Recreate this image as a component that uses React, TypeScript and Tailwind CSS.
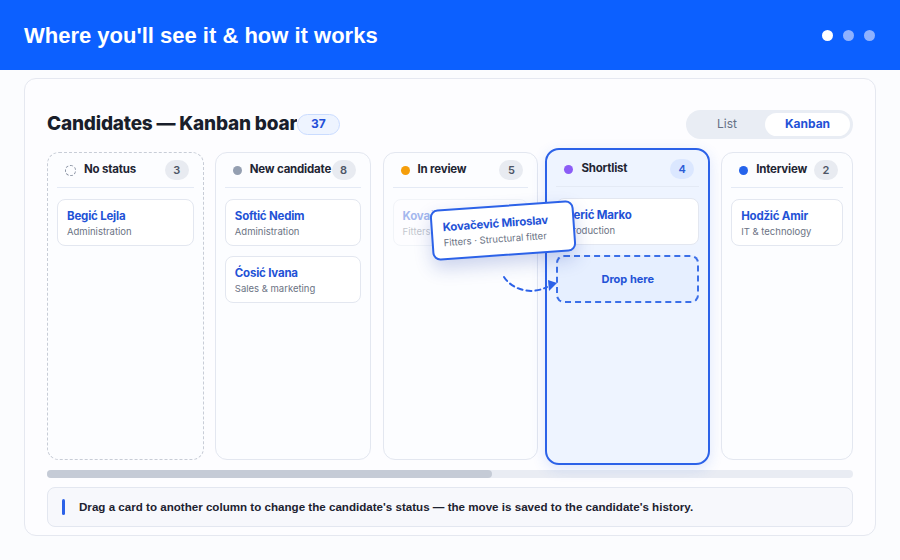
import React from 'react';

type Card = { name: string; sub: string };

const font = { fontFamily: 'Inter, "Noto Sans", sans-serif' };

function Dot({ color }: { color: string }) {
  return <span className={`w-[9px] h-[9px] rounded-full shrink-0 ${color}`} />;
}

function ColumnHeader({ dot, title, count, active }: { dot: React.ReactNode; title: string; count: number; active?: boolean }) {
  return (
    <div className="mx-[9px] h-[35px] flex items-center border-b border-[#e4eaf5]">
      <div className="flex items-center gap-[8px] pl-[8px] flex-1 min-w-0">
        {dot}
        <span className="text-[11.5px] font-bold text-[#1f2533] whitespace-nowrap tracking-[-0.2px]">{title}</span>
      </div>
      <span
        className={`w-[24px] h-[20px] shrink-0 rounded-full text-[11px] font-semibold flex items-center justify-center mr-[5px] ${
          active ? 'bg-[#dbe7ff] text-[#2b5bd7]' : 'bg-[#e8ebf1] text-[#4d5566]'
        }`}
      >
        {count}
      </span>
    </div>
  );
}

function CandidateCard({ card, faded }: { card: Card; faded?: boolean }) {
  return (
    <div className={`h-[47px] rounded-lg border border-[#e3e7f0] bg-white px-[9px] pt-[8px] ${faded ? 'opacity-40' : ''}`}>
      <div className="text-[11.5px] font-bold text-[#2352d6] leading-[16px] tracking-[-0.2px] whitespace-nowrap">{card.name}</div>
      <div className="text-[9.5px] text-[#6b7384] leading-[16px] whitespace-nowrap">{card.sub}</div>
    </div>
  );
}

export default function App() {
  return (
    <div className="w-[900px] h-[560px] bg-[#fbfcfe] overflow-hidden" style={font}>
      {/* top banner */}
      <div className="h-[70px] bg-[#0c60ff] flex items-center justify-between px-[24px]">
        <h1 className="text-white text-[22px] font-bold" style={{ fontFamily: '"Liberation Sans", Arial, sans-serif' }}>
          Where you'll see it &amp; how it works
        </h1>
        <div className="flex items-center gap-[10px] pr-[1px]">
          <span className="w-[11px] h-[11px] rounded-full bg-white" />
          <span className="w-[11px] h-[11px] rounded-full bg-[#8fb2ff]" />
          <span className="w-[11px] h-[11px] rounded-full bg-[#8fb2ff]" />
        </div>
      </div>

      {/* panel */}
      <div className="mx-[24px] mt-[8px] h-[458px] rounded-xl border border-[#e5e8f0] bg-[#fdfdff] px-[22px] pt-[30px]">
        <div className="flex items-center justify-between h-[30px]">
          <div className="flex items-center">
            <div className="w-[250px] overflow-hidden whitespace-nowrap text-[19px] font-extrabold text-[#191e2b] tracking-[-0.2px]">
              Candidates — Kanban board
            </div>
            <span className="h-[21px] px-[13px] rounded-full bg-[#eef4ff] border border-[#cadcff] text-[12px] font-bold text-[#2450d8] flex items-center">
              37
            </span>
          </div>
          <div className="h-[29px] w-[167px] rounded-full bg-[#e9edf4] flex items-center p-[3px]">
            <span className="w-[76px] text-center text-[12px] text-[#667085]">List</span>
            <span className="flex-1 h-[23px] rounded-full bg-white text-[12px] font-bold text-[#2352d6] flex items-center justify-center">
              Kanban
            </span>
          </div>
        </div>

        {/* board */}
        <div className="relative mt-[13px] flex h-[308px]">
          {/* No status */}
          <div className="w-[157px] rounded-xl border-[1.5px] border-dashed border-[#c8cdd7] bg-[#fcfdff]">
            <ColumnHeader
              dot={<span className="w-[11px] h-[11px] rounded-full border-[1.5px] border-dashed border-[#8d96a6] shrink-0" />}
              title="No status"
              count={3}
            />
            <div className="px-[9px] pt-[11px] flex flex-col gap-[10px]">
              <CandidateCard card={{ name: 'Begić Lejla', sub: 'Administration' }} />
            </div>
          </div>

          {/* New candidate */}
          <div className="ml-[11px] w-[156px] rounded-xl border border-[#e3e7f0] bg-[#fcfdff]">
            <ColumnHeader dot={<Dot color="bg-[#949fb1]" />} title="New candidate" count={8} />
            <div className="px-[9px] pt-[11px] flex flex-col gap-[10px]">
              <CandidateCard card={{ name: 'Softić Nedim', sub: 'Administration' }} />
              <CandidateCard card={{ name: 'Ćosić Ivana', sub: 'Sales & marketing' }} />
            </div>
          </div>

          {/* In review */}
          <div className="ml-[12px] w-[156px] rounded-xl border border-[#e3e7f0] bg-[#fcfdff] overflow-hidden">
            <ColumnHeader dot={<Dot color="bg-[#f59e0b]" />} title="In review" count={5} />
            <div className="px-[9px] pt-[11px] flex flex-col gap-[10px]">
              <CandidateCard card={{ name: 'Kovačević Miroslav', sub: 'Fitters · Structural fitter' }} faded />
            </div>
          </div>

          {/* Shortlist (drop target) */}
          <div className="ml-[7px] -mt-[4px] -mb-[5px] w-[165px] rounded-[14px] border-2 border-[#2c62e8] bg-[#eef4ff] shadow-[0_4px_14px_rgba(37,99,235,0.15)] overflow-hidden">
            <div className="pt-[2px]">
              <ColumnHeader dot={<Dot color="bg-[#8b5cf6]" />} title="Shortlist" count={4} active />
            </div>
            <div className="px-[9px] pt-[11px] flex flex-col gap-[10px]">
              <CandidateCard card={{ name: 'Perić Marko', sub: 'Production' }} />
              <div className="h-[48px] rounded-lg border-2 border-dashed border-[#3b6fe8] bg-[#e6efff] flex items-center justify-center text-[11px] font-bold text-[#2352d6]">
                Drop here
              </div>
            </div>
          </div>

          {/* Interview */}
          <div className="ml-[11px] w-[132px] rounded-xl border border-[#e3e7f0] bg-[#fcfdff]">
            <ColumnHeader dot={<Dot color="bg-[#2563eb]" />} title="Interview" count={2} />
            <div className="px-[9px] pt-[11px] flex flex-col gap-[10px]">
              <CandidateCard card={{ name: 'Hodžić Amir', sub: 'IT & technology' }} />
            </div>
          </div>

          {/* dragged card */}
          <div className="absolute left-[384px] top-[53px] w-[144px] h-[51px] rotate-[-4deg] rounded-lg border-2 border-[#2c62e8] bg-white px-[10px] pt-[8px] shadow-[0_8px_18px_rgba(30,64,175,0.22)]">
            <div className="text-[11.5px] font-bold text-[#2352d6] leading-[16px] tracking-[-0.2px] whitespace-nowrap">Kovačević Miroslav</div>
            <div className="text-[9.5px] text-[#6b7384] leading-[16px] whitespace-nowrap">Fitters · Structural fitter</div>
          </div>

          {/* dashed arrow */}
          <svg className="absolute left-[450px] top-[118px]" width="70" height="40" viewBox="0 0 70 40" fill="none">
            <path d="M7 7 C 14 18, 32 26, 50 17" stroke="#2c62e8" strokeWidth="2" strokeDasharray="5 4" strokeLinecap="round" />
            <path d="M51 10 L60 13 L52 21 Z" fill="#2c62e8" />
          </svg>
        </div>

        {/* scrollbar */}
        <div className="mt-[10px] h-[8px] rounded-full bg-[#e9ecf3]">
          <div className="h-full w-[445px] rounded-full bg-[#c5cbd6]" />
        </div>

        {/* note */}
        <div className="mt-[9px] h-[40px] rounded-lg border border-[#e3e7f0] bg-[#f7f8fc] flex items-center pl-[14px] gap-[14px]">
          <span className="w-[3px] h-[16px] rounded-full bg-[#2c62e8]" />
          <span
            className="text-[11.6px] font-bold text-[#1d2230]"
            style={{ fontFamily: '"Liberation Sans Narrow", "Liberation Sans", Arial, sans-serif' }}
          >
            Drag a card to another column to change the candidate's status — the move is saved to the candidate's history.
          </span>
        </div>
      </div>
    </div>
  );
}
